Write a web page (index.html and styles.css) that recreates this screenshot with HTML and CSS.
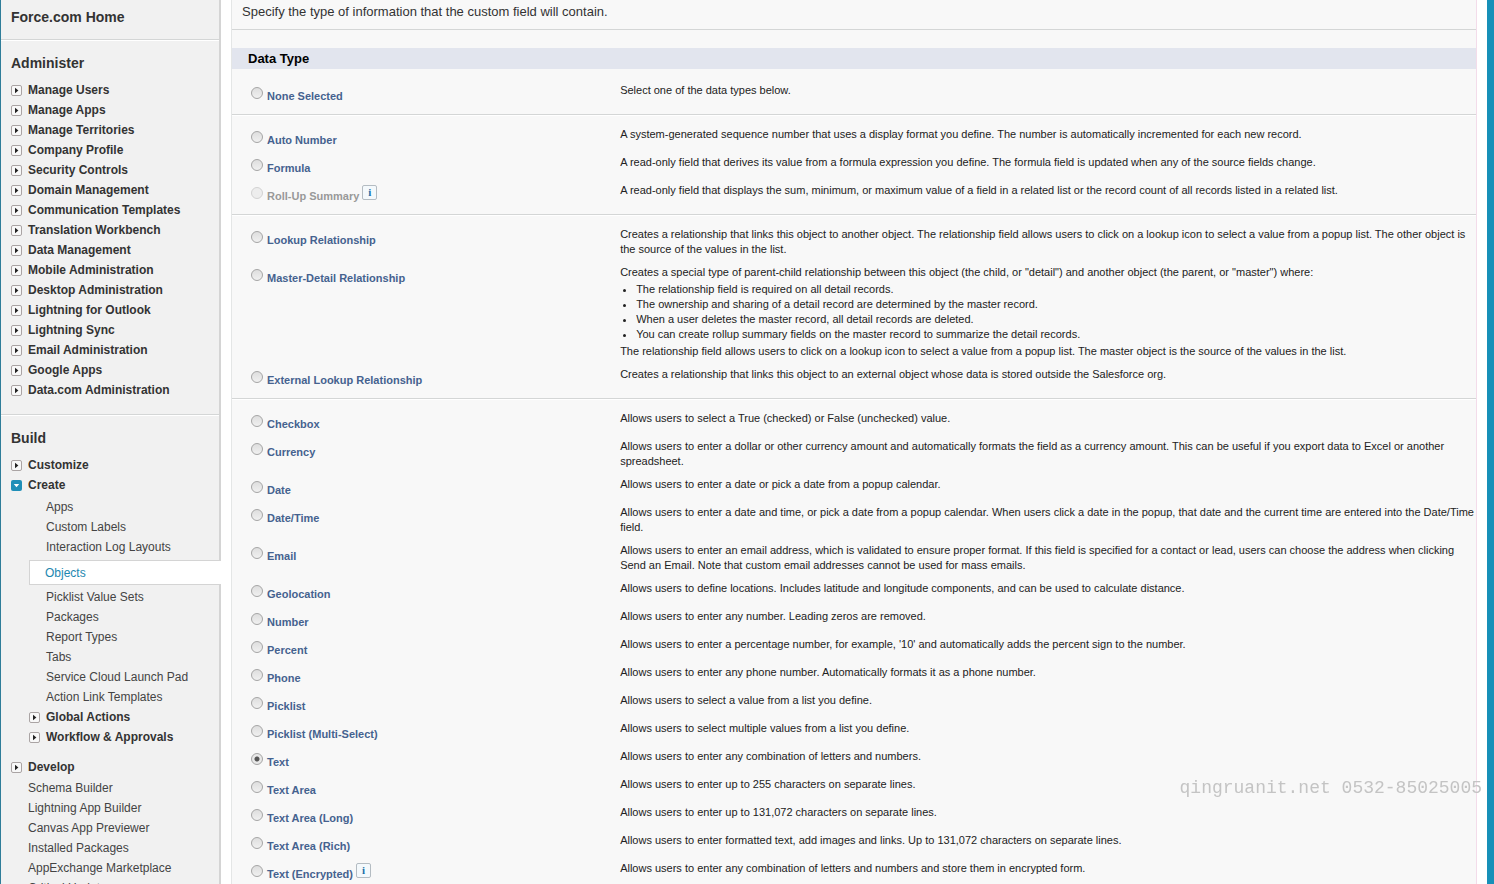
FILE: index.html
```html
<!DOCTYPE html>
<html lang="en">
<head>
<meta charset="utf-8">
<title>New Custom Field</title>
<link rel="stylesheet" href="styles.css">
</head>
<body>
<svg class="defs" aria-hidden="true">
  <symbol id="closed" viewBox="0 0 11 11"><rect x=".5" y=".5" width="10" height="10" rx="1.5" fill="#f8f8f8" stroke="#aaa4a4"/><path d="M4 2.8 7.4 5.5 4 8.2Z" fill="#222"/></symbol>
  <symbol id="open" viewBox="0 0 11 11"><rect width="11" height="11" rx="2" fill="#1f8fb8"/><path d="M2.8 4h5.4L5.5 7.2Z" fill="#fff"/></symbol>
</svg>
<div class="shell">
  <nav class="sidebar" aria-label="Setup">
    <section class="block home"><h2>Force.com Home</h2></section>
    <section class="block">
      <h2>Administer</h2>
      <ul class="menu">
        <li><a href="#"><svg><use href="#closed"/></svg>Manage Users</a></li>
        <li><a href="#"><svg><use href="#closed"/></svg>Manage Apps</a></li>
        <li><a href="#"><svg><use href="#closed"/></svg>Manage Territories</a></li>
        <li><a href="#"><svg><use href="#closed"/></svg>Company Profile</a></li>
        <li><a href="#"><svg><use href="#closed"/></svg>Security Controls</a></li>
        <li><a href="#"><svg><use href="#closed"/></svg>Domain Management</a></li>
        <li><a href="#"><svg><use href="#closed"/></svg>Communication Templates</a></li>
        <li><a href="#"><svg><use href="#closed"/></svg>Translation Workbench</a></li>
        <li><a href="#"><svg><use href="#closed"/></svg>Data Management</a></li>
        <li><a href="#"><svg><use href="#closed"/></svg>Mobile Administration</a></li>
        <li><a href="#"><svg><use href="#closed"/></svg>Desktop Administration</a></li>
        <li><a href="#"><svg><use href="#closed"/></svg>Lightning for Outlook</a></li>
        <li><a href="#"><svg><use href="#closed"/></svg>Lightning Sync</a></li>
        <li><a href="#"><svg><use href="#closed"/></svg>Email Administration</a></li>
        <li><a href="#"><svg><use href="#closed"/></svg>Google Apps</a></li>
        <li><a href="#"><svg><use href="#closed"/></svg>Data.com Administration</a></li>
      </ul>
    </section>
    <section class="block">
      <h2>Build</h2>
      <ul class="menu">
        <li><a href="#"><svg><use href="#closed"/></svg>Customize</a></li>
        <li><a href="#"><svg><use href="#open"/></svg>Create</a>
          <ul class="submenu">
            <li><a href="#">Apps</a></li>
            <li><a href="#">Custom Labels</a></li>
            <li><a href="#">Interaction Log Layouts</a></li>
            <li class="current"><a href="#" aria-current="page">Objects</a></li>
            <li><a href="#">Picklist Value Sets</a></li>
            <li><a href="#">Packages</a></li>
            <li><a href="#">Report Types</a></li>
            <li><a href="#">Tabs</a></li>
            <li><a href="#">Service Cloud Launch Pad</a></li>
            <li><a href="#">Action Link Templates</a></li>
          </ul>
          <ul class="nested">
            <li><a href="#"><svg><use href="#closed"/></svg>Global Actions</a></li>
            <li><a href="#"><svg><use href="#closed"/></svg>Workflow &amp; Approvals</a></li>
          </ul>
        </li>
        <li><a href="#"><svg><use href="#closed"/></svg>Develop</a></li>
      </ul>
      <ul class="links">
        <li><a href="#">Schema Builder</a></li>
        <li><a href="#">Lightning App Builder</a></li>
        <li><a href="#">Canvas App Previewer</a></li>
        <li><a href="#">Installed Packages</a></li>
        <li><a href="#">AppExchange Marketplace</a></li>
        <li><a href="#">Critical Updates</a></li>
      </ul>
    </section>
  </nav>
  <main class="content">
    <p class="intro">Specify the type of information that the custom field will contain.</p>
    <h3 class="bar">Data Type</h3>
    <table class="types">
      <colgroup><col class="name-col"><col></colgroup>
      <tbody>
        <tr><th scope="row"><label><input type="radio" name="type">None Selected</label></th><td>Select one of the data types below.</td></tr>
      </tbody>
      <tbody>
        <tr><th scope="row"><label><input type="radio" name="type">Auto Number</label></th><td>A system-generated sequence number that uses a display format you define. The number is automatically incremented for each new record.</td></tr>
        <tr><th scope="row"><label><input type="radio" name="type">Formula</label></th><td>A read-only field that derives its value from a formula expression you define. The formula field is updated when any of the source fields change.</td></tr>
        <tr><th scope="row"><div class="with-info"><label class="off"><input type="radio" name="type" disabled>Roll-Up Summary</label><button type="button" class="info" aria-label="Roll-Up Summary info">i</button></div></th><td>A read-only field that displays the sum, minimum, or maximum value of a field in a related list or the record count of all records listed in a related list.</td></tr>
      </tbody>
      <tbody>
        <tr><th scope="row"><label><input type="radio" name="type">Lookup Relationship</label></th><td>Creates a relationship that links this object to another object. The relationship field allows users to click on a lookup icon to select a value from a popup list. The other object is the source of the values in the list.</td></tr>
        <tr><th scope="row"><label><input type="radio" name="type">Master-Detail Relationship</label></th><td>Creates a special type of parent-child relationship between this object (the child, or "detail") and another object (the parent, or "master") where:
          <ul class="notes">
            <li>The relationship field is required on all detail records.</li>
            <li>The ownership and sharing of a detail record are determined by the master record.</li>
            <li>When a user deletes the master record, all detail records are deleted.</li>
            <li>You can create rollup summary fields on the master record to summarize the detail records.</li>
          </ul>
          The relationship field allows users to click on a lookup icon to select a value from a popup list. The master object is the source of the values in the list.</td></tr>
        <tr><th scope="row"><label><input type="radio" name="type">External Lookup Relationship</label></th><td>Creates a relationship that links this object to an external object whose data is stored outside the Salesforce org.</td></tr>
      </tbody>
      <tbody>
        <tr><th scope="row"><label><input type="radio" name="type">Checkbox</label></th><td>Allows users to select a True (checked) or False (unchecked) value.</td></tr>
        <tr><th scope="row"><label><input type="radio" name="type">Currency</label></th><td>Allows users to enter a dollar or other currency amount and automatically formats the field as a currency amount. This can be useful if you export data to Excel or another spreadsheet.</td></tr>
        <tr><th scope="row"><label><input type="radio" name="type">Date</label></th><td>Allows users to enter a date or pick a date from a popup calendar.</td></tr>
        <tr><th scope="row"><label><input type="radio" name="type">Date/Time</label></th><td>Allows users to enter a date and time, or pick a date from a popup calendar. When users click a date in the popup, that date and the current time are entered into the Date/Time field.</td></tr>
        <tr><th scope="row"><label><input type="radio" name="type">Email</label></th><td>Allows users to enter an email address, which is validated to ensure proper format. If this field is specified for a contact or lead, users can choose the address when clicking Send an Email. Note that custom email addresses cannot be used for mass emails.</td></tr>
        <tr><th scope="row"><label><input type="radio" name="type">Geolocation</label></th><td>Allows users to define locations. Includes latitude and longitude components, and can be used to calculate distance.</td></tr>
        <tr><th scope="row"><label><input type="radio" name="type">Number</label></th><td>Allows users to enter any number. Leading zeros are removed.</td></tr>
        <tr><th scope="row"><label><input type="radio" name="type">Percent</label></th><td>Allows users to enter a percentage number, for example, '10' and automatically adds the percent sign to the number.</td></tr>
        <tr><th scope="row"><label><input type="radio" name="type">Phone</label></th><td>Allows users to enter any phone number. Automatically formats it as a phone number.</td></tr>
        <tr><th scope="row"><label><input type="radio" name="type">Picklist</label></th><td>Allows users to select a value from a list you define.</td></tr>
        <tr><th scope="row"><label><input type="radio" name="type">Picklist (Multi-Select)</label></th><td>Allows users to select multiple values from a list you define.</td></tr>
        <tr><th scope="row"><label><input type="radio" name="type" checked>Text</label></th><td>Allows users to enter any combination of letters and numbers.</td></tr>
        <tr><th scope="row"><label><input type="radio" name="type">Text Area</label></th><td>Allows users to enter up to 255 characters on separate lines.</td></tr>
        <tr><th scope="row"><label><input type="radio" name="type">Text Area (Long)</label></th><td>Allows users to enter up to 131,072 characters on separate lines.</td></tr>
        <tr><th scope="row"><label><input type="radio" name="type">Text Area (Rich)</label></th><td>Allows users to enter formatted text, add images and links. Up to 131,072 characters on separate lines.</td></tr>
        <tr><th scope="row"><div class="with-info"><label><input type="radio" name="type">Text (Encrypted)</label><button type="button" class="info" aria-label="Text (Encrypted) info">i</button></div></th><td>Allows users to enter any combination of letters and numbers and store them in encrypted form.</td></tr>
      </tbody>
    </table>
  </main>
</div>
<div class="watermark">qingruanit.net 0532-85025005</div>
</body>
</html>
```
FILE: styles.css
```css
* { box-sizing: border-box; }
body {
  margin: 0;
  font-family: "Liberation Sans", Arial, sans-serif;
  font-size: 12px;
  color: #222;
  background: #fff;
}
ul { list-style: none; margin: 0; padding: 0; }
a { color: inherit; text-decoration: none; }
.defs { display: none; }
.shell {
  display: flex;
  gap: 10px;
  height: 100vh;
  overflow: hidden;
  border-left: 1px solid #2f7d99;
  border-right: 7px solid #1790b8;
  padding-right: 10px;
}

/* Setup menu */
.sidebar {
  flex: 0 0 220px;
  align-self: flex-start;
  background: #f1f1f1;
  border-right: 2px solid #d4d4d4;
}
.block {
  padding: 12px 0 14px 10px;
  border-bottom: 1px solid #d4d6d6;
  border-top: 1px solid #fff;
}
.home { padding: 6px 0 12px 10px; border-top-color: #f1f1f1; }
h2 { margin: 0; font-size: 14px; line-height: 20px; color: #333; }
.menu { margin-top: 7px; font-weight: bold; color: #333; }
.menu a, .links a { display: flex; align-items: center; line-height: 20px; }
.menu svg { width: 11px; height: 11px; margin-right: 6px; }
.submenu { padding: 2px 0 0 18px; font-weight: normal; }
.submenu a { padding-left: 17px; }
.submenu .current {
  margin: 3px -2px 2px 0;
  background: #fff;
  border: 1px solid #d4d4d4;
  border-width: 1px 0 1px 1px;
  color: #1d87b0;
}
.submenu .current a { padding: 2px 0 1px 15px; }
.nested { padding: 0 0 10px 18px; }
.links { padding: 1px 0 0 17px; color: #444; }
.submenu li { color: #444; }

/* Field type chooser */
.content {
  flex: 1;
  min-width: 0;
  background: #f8f8f8;
  border-left: 1px solid #e4e6e6;
  border-right: 1px solid #f3dcea;
}
.intro {
  margin: 0 0 18px;
  padding: 2px 10px 7px;
  font-size: 13px;
  line-height: 20px;
  color: #333;
  border-bottom: 1px solid #d4d6d6;
}
.bar {
  margin: 0;
  padding: 0 16px;
  font-size: 13px;
  line-height: 21px;
  color: #000;
  background: #e2e5ee;
}
.types {
  width: 100%;
  margin-top: 1px;
  table-layout: fixed;
  border-spacing: 0;
  font-size: 11px;
  line-height: 15px;
}
.name-col { width: 31.2%; }
.types th, .types td { padding: 4px 0; text-align: left; vertical-align: top; }
.types th { padding-left: 16px; color: #45628f; }
.types tbody tr:first-child > * { padding-top: 12px; border-top: 1px solid #fff; }
.types tbody:first-of-type tr:first-child > * { border-top-color: #f8f8f8; }
.types tbody tr:last-child > * { padding-bottom: 11px; border-bottom: 1px solid #d4d6d6; }
.types tbody:not(:first-of-type) tr:first-child > * { padding-top: 11px; }
.types label { display: flex; align-items: flex-end; height: 20px; line-height: 13px; }
.types label.off { color: #999; }
.types input {
  appearance: none;
  width: 12px;
  height: 12px;
  margin: 0 4px 4px 3px;
  border: 1px solid #a5a5a5;
  border-radius: 50%;
  background: linear-gradient(#dedede, #f0f0f0);
}
.types input:checked { background: radial-gradient(circle, #555 0 2px, #e8e8e8 3px); }
.types input:disabled { border-color: #d2d2d2; background: #ededed; }
.with-info { display: flex; height: 20px; }
.info {
  width: 15px;
  height: 15px;
  margin: 2px 0 0 3px;
  padding: 0;
  border: 1px solid #b4bcc2;
  border-radius: 2px;
  background: #f4f9fc;
  color: #1b6fa8;
  font: bold 11px/13px "Liberation Serif", serif;
}
.notes { margin: 2px 0; padding-left: 16px; list-style: disc; }

.watermark {
  position: fixed;
  right: 12px;
  top: 778px;
  font: 18px/20px "Liberation Mono", monospace;
  color: #c4c4c4;
}
```
